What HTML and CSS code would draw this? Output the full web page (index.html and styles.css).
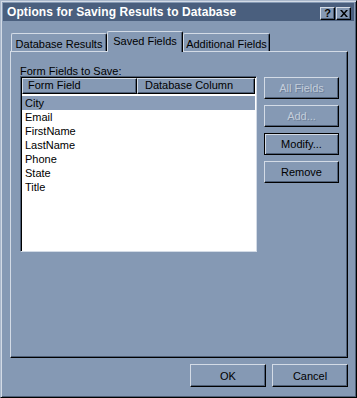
FILE: index.html
```html
<!DOCTYPE html>
<html>
<head>
<meta charset="utf-8">
<link rel="stylesheet" href="styles.css">
</head>
<body>
<div class="window">
  <div class="titlebar">
    <span class="title">Options for Saving Results to Database</span>
    <div class="tbtns">
      <span class="tbtn">?</span>
      <span class="tbtn x">
        <svg width="8" height="7" viewBox="0 0 8 7"><path d="M0 0h2l2 2.5L6 0h2L5 3.5 8 7H6L4 4.5 2 7H0l3-3.5z" fill="#000"/></svg>
      </span>
    </div>
  </div>
  <div class="tabs">
    <div class="tab t1">Database Results</div>
    <div class="tab t2 active">Saved Fields</div>
    <div class="tab t3">Additional Fields</div>
  </div>
  <div class="panel">
    <div class="left">
      <div class="label">Form Fields to Save:</div>
      <div class="list">
        <div class="header">
          <div class="hcell c1">Form Field</div>
          <div class="hcell c2">Database Column</div>
        </div>
        <div class="rows">
          <div class="row sel">City</div>
          <div class="row">Email</div>
          <div class="row">FirstName</div>
          <div class="row">LastName</div>
          <div class="row">Phone</div>
          <div class="row">State</div>
          <div class="row">Title</div>
        </div>
      </div>
    </div>
    <div class="side">
      <div class="btn disabled">All Fields</div>
      <div class="btn disabled">Add...</div>
      <div class="btn default">Modify...</div>
      <div class="btn">Remove</div>
    </div>
  </div>
  <div class="footer">
    <div class="btn fbtn">OK</div>
    <div class="btn fbtn">Cancel</div>
  </div>
</div>
</body>
</html>
```
FILE: styles.css
```css
* { box-sizing: border-box; }
html, body { margin: 0; padding: 0; background: #8599b4; }
body { font-family: "Liberation Sans", Arial, sans-serif; font-size: 11px; color: #000; }

.window {
  width: 357px;
  height: 398px;
  background: #8599b4;
  border-top: 1px solid #a9b7cb;
  border-left: 1px solid #a9b7cb;
  border-right: 1px solid #000;
  border-bottom: 1px solid #000;
  box-shadow: inset 1px 1px 0 #d3dbe6, inset -1px -1px 0 #4e5f77;
  padding: 2px;
  display: flex;
  flex-direction: column;
}

.titlebar {
  height: 18px;
  background: #4a5f7e;
  display: flex;
  align-items: center;
  justify-content: space-between;
  padding: 0 3px 0 4px;
}
.title {
  color: #fff;
  font-weight: bold;
  font-size: 12px;
  letter-spacing: 0.1px;
}
.tbtns { display: flex; gap: 1px; margin-top: 2px; }
.tbtn {
  width: 15px;
  height: 13px;
  background: #8599b4;
  border-top: 1px solid #d3dbe6;
  border-left: 1px solid #d3dbe6;
  border-right: 1px solid #000;
  border-bottom: 1px solid #000;
  box-shadow: inset -1px -1px 0 #4e5f77;
  display: flex;
  align-items: center;
  justify-content: center;
  font-weight: bold;
  font-size: 11px;
  line-height: 1;
}

.tabs {
  display: flex;
  align-items: flex-end;
  height: 20px;
  margin-top: 10px;
  padding-left: 8px;
}
.tab {
  height: 18px;
  border-top: 1px solid #d3dbe6;
  border-left: 1px solid #d3dbe6;
  border-right: 1px solid #000;
  box-shadow: inset -1px 0 0 #4e5f77;
  border-radius: 2px 2px 0 0;
  display: flex;
  align-items: center;
  justify-content: center;
  font-size: 11px;
  padding-top: 2px;
}
.t1 { width: 96px; }
.t2 { width: 76px; }
.t3 { width: 87px; }
.tab.active {
  height: 21px;
  margin-bottom: -1px;
  position: relative;
  z-index: 1;
  background: #8599b4;
  padding-top: 0;
  padding-bottom: 3px;
}

.panel {
  height: 307px;
  margin: 0 6px 0 7px;
  border-top: 1px solid #d3dbe6;
  border-left: 1px solid #d3dbe6;
  border-right: 1px solid #000;
  border-bottom: 1px solid #000;
  box-shadow: inset -1px -1px 0 #4e5f77;
  display: flex;
  gap: 7px;
  padding: 12px 0 0 9px;
}

.left { display: flex; flex-direction: column; width: 237px; }
.label { height: 12px; line-height: 12px; padding-top: 1px; margin-bottom: 0; }
.list {
  height: 176px;
  border-top: 1px solid #4e5f77;
  border-left: 1px solid #4e5f77;
  border-right: 1px solid #d3dbe6;
  border-bottom: 1px solid #d3dbe6;
  box-shadow: inset 1px 1px 0 #000;
  background: #fff;
  padding: 1px 1px 0 1px;
  display: flex;
  flex-direction: column;
}
.header { display: flex; height: 16px; flex: none; }
.hcell {
  height: 16px;
  background: #8599b4;
  border-top: 1px solid #d3dbe6;
  border-left: 1px solid #d3dbe6;
  border-right: 1px solid #000;
  border-bottom: 1px solid #000;
  box-shadow: inset -1px -1px 0 #4e5f77;
  padding-left: 5px;
  line-height: 13px;
}
.c1 { width: 115px; }
.c2 { flex: 1; padding-left: 7px; }
.rows { padding-top: 2px; }
.row { height: 14px; line-height: 14px; padding-left: 3px; }
.row.sel { background: #8a9db8; }

.side { display: flex; flex-direction: column; gap: 6px; padding-top: 13px; }
.btn {
  width: 75px;
  height: 22px;
  background: #8599b4;
  border-top: 1px solid #d3dbe6;
  border-left: 1px solid #d3dbe6;
  border-right: 1px solid #000;
  border-bottom: 1px solid #000;
  box-shadow: inset -1px -1px 0 #4e5f77;
  display: flex;
  align-items: center;
  justify-content: center;
  font-size: 11px;
}
.btn.disabled { color: #c3cddb; text-shadow: 1px 1px 0 #6f819a; }
.btn.default {
  border: 1px solid #000;
  box-shadow: inset 1px 1px 0 #d3dbe6, inset -1px -1px 0 #4e5f77;
}

.footer {
  display: flex;
  justify-content: flex-end;
  gap: 6px;
  margin-top: 6px;
  padding-right: 6px;
}
.fbtn { width: 76px; height: 23px; }
```
